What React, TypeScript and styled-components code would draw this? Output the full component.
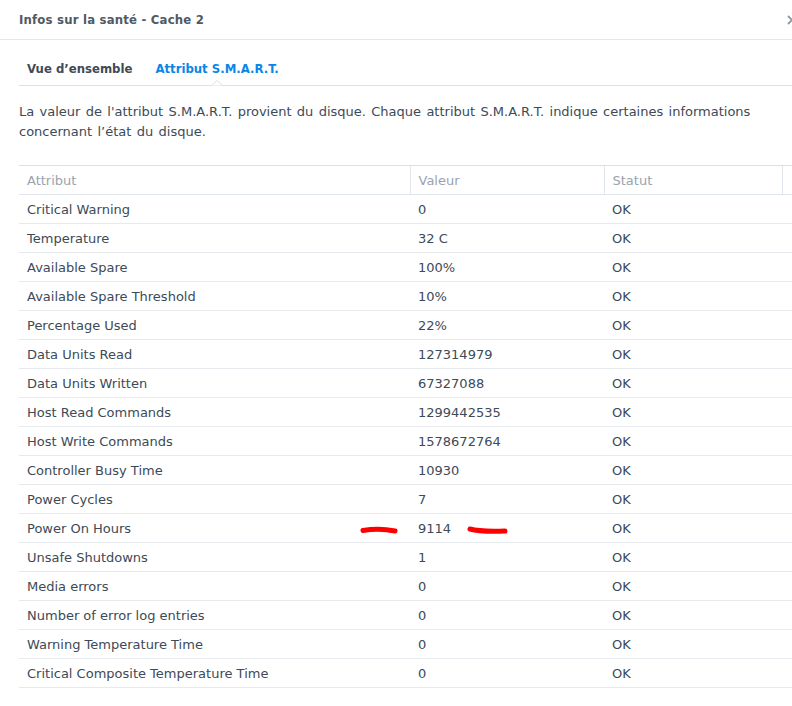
import React from 'react';
import styled, { createGlobalStyle } from 'styled-components';

const GlobalStyle = createGlobalStyle`
  html, body {
    margin: 0;
    padding: 0;
    background: #ffffff;
  }
  body {
    font-family: 'DejaVu Sans', Verdana, sans-serif;
    font-size: 13px;
    color: #3d4a57;
    overflow: hidden;
  }
`;

const Window = styled.div`
  width: 792px;
  height: 706px;
  background: #fff;
  overflow: hidden;
`;

const TitleBar = styled.div`
  height: 39px;
  display: flex;
  align-items: center;
  justify-content: space-between;
  padding-left: 19px;
  border-bottom: 1px solid #e4e8ed;
`;

const Title = styled.span`
  font-family: 'DejaVu Sans Condensed', 'DejaVu Sans', sans-serif;
  font-weight: bold;
  color: #505a64;
  letter-spacing: 0.2px;
`;

const Close = styled.span`
  display: flex;
  margin-right: -6px;
  color: #8f979f;
`;

const Body = styled.div`
  padding-left: 19px;
`;

const Tabs = styled.div`
  height: 45px;
  display: flex;
  align-items: center;
  gap: 7px;
  border-bottom: 1px solid #d9e0e8;
`;

const Tab = styled.div<{ active?: boolean }>`
  position: relative;
  height: 100%;
  box-sizing: border-box;
  display: flex;
  align-items: center;
  padding: 11px 8px 0;
  font-family: 'DejaVu Sans Condensed', 'DejaVu Sans', sans-serif;
  font-weight: bold;
  color: ${({ active }) => (active ? '#0a86e6' : '#3f4a55')};
`;

// little arrow cut into the tab underline, under the active tab
const Notch = styled.span`
  position: absolute;
  bottom: -1px;
  left: 50%;
  transform: translateX(-50%);
  width: 11px;
  height: 6px;
  display: flex;
`;

const Description = styled.p`
  margin: 0;
  padding: 16px 0 0;
  line-height: 20px;
  word-spacing: 1.2px;
  color: #3d4a57;
  height: 63px;
`;

const Table = styled.table`
  width: 773px;
  border-collapse: collapse;
  table-layout: fixed;
`;

const Col = styled.col<{ w: number }>`
  width: ${({ w }) => w}px;
`;

const HeadCell = styled.th<{ divider?: boolean }>`
  height: 28px;
  padding: 0 0 0 8px;
  text-align: left;
  font-weight: normal;
  color: #9aa3ad;
  border-top: 1px solid #d9e0e8;
  border-bottom: 1px solid #e1e6ec;
  border-left: ${({ divider }) => (divider ? '1px solid #e1e6ec' : 'none')};
  white-space: nowrap;
`;

const Cell = styled.td`
  height: 28px;
  padding: 0 0 0 8px;
  color: #3d4a57;
  border-bottom: 1px solid #e6eaee;
  white-space: nowrap;
`;

const Value = styled.span`
  position: relative;
`;

// red hand-drawn strokes around the highlighted value
const Mark = styled.svg<{ offset: number }>`
  position: absolute;
  left: ${({ offset }) => offset}px;
  top: 5px;
  overflow: visible;
`;

type Row = { name: string; value: string; marked?: boolean };

const rows: Row[] = [
  { name: 'Critical Warning', value: '0' },
  { name: 'Temperature', value: '32 C' },
  { name: 'Available Spare', value: '100%' },
  { name: 'Available Spare Threshold', value: '10%' },
  { name: 'Percentage Used', value: '22%' },
  { name: 'Data Units Read', value: '127314979' },
  { name: 'Data Units Written', value: '67327088' },
  { name: 'Host Read Commands', value: '1299442535' },
  { name: 'Host Write Commands', value: '1578672764' },
  { name: 'Controller Busy Time', value: '10930' },
  { name: 'Power Cycles', value: '7' },
  { name: 'Power On Hours', value: '9114', marked: true },
  { name: 'Unsafe Shutdowns', value: '1' },
  { name: 'Media errors', value: '0' },
  { name: 'Number of error log entries', value: '0' },
  { name: 'Warning Temperature Time', value: '0' },
  { name: 'Critical Composite Temperature Time', value: '0' },
];

export default function App() {
  return (
    <Window>
      <GlobalStyle />
      <TitleBar>
        <Title>Infos sur la santé - Cache 2</Title>
        <Close>
          <svg width="12" height="12" viewBox="0 0 12 12">
            <path d="M2 2 L10 10 M10 2 L2 10" stroke="currentColor" strokeWidth="1.8" />
          </svg>
        </Close>
      </TitleBar>
      <Body>
        <Tabs>
          <Tab>Vue d’ensemble</Tab>
          <Tab active>
            Attribut S.M.A.R.T.
            <Notch>
              <svg width="11" height="6" viewBox="0 0 11 6">
                <path d="M0 5.5 L5.5 0.5 L11 5.5" fill="#fff" stroke="#d9e0e8" strokeWidth="1" />
              </svg>
            </Notch>
          </Tab>
        </Tabs>
        <Description>
          La valeur de l'attribut S.M.A.R.T. provient du disque. Chaque attribut S.M.A.R.T. indique certaines informations
          concernant l’état du disque.
        </Description>
        <Table>
          <colgroup>
            <Col w={391} />
            <Col w={194} />
            <Col w={178} />
            <Col w={10} />
          </colgroup>
          <thead>
            <tr>
              <HeadCell>Attribut</HeadCell>
              <HeadCell divider>Valeur</HeadCell>
              <HeadCell divider>Statut</HeadCell>
              <HeadCell divider />
            </tr>
          </thead>
          <tbody>
            {rows.map((r) => (
              <tr key={r.name}>
                <Cell>{r.name}</Cell>
                <Cell>
                  <Value>
                    {r.value}
                    {r.marked && (
                      <>
                        <Mark offset={-58} width="38" height="8" viewBox="0 0 38 8">
                          <path d="M3 4.5 C12 3, 26 3.2, 35 5" stroke="#ff0000" strokeWidth="5" strokeLinecap="round" fill="none" />
                        </Mark>
                        <Mark offset={49} width="41" height="8" viewBox="0 0 41 8">
                          <path d="M3 3 C10 5, 24 5.5, 38 5" stroke="#ff0000" strokeWidth="5" strokeLinecap="round" fill="none" />
                        </Mark>
                      </>
                    )}
                  </Value>
                </Cell>
                <Cell>OK</Cell>
                <Cell />
              </tr>
            ))}
          </tbody>
        </Table>
      </Body>
    </Window>
  );
}
